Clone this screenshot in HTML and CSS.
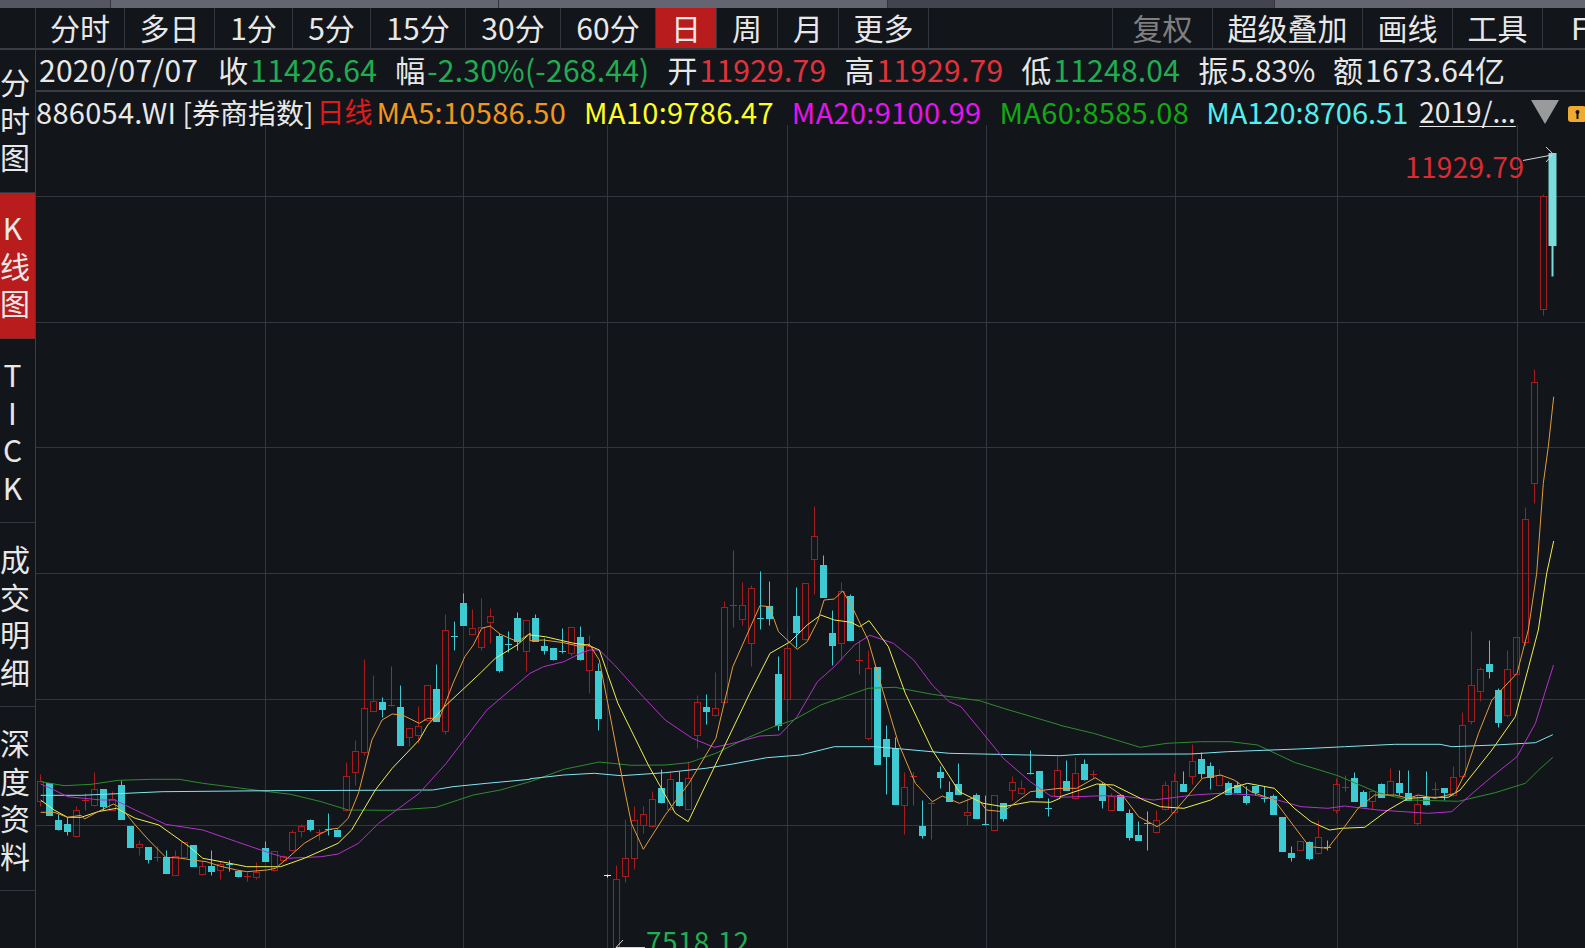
FILE: index.html
```html
<!DOCTYPE html>
<html lang="zh-CN">
<head>
<meta charset="utf-8">
<title>886054.WI 券商指数 日线</title>
<link rel="stylesheet" href="styles.css">
</head>
<body>
<div class="strip">
  <div class="seg seg-a"></div>
  <div class="seg seg-b"></div>
  <div class="seg seg-c"></div>
  <div class="seg seg-d"></div>
  <div class="seg seg-e"></div>
</div>
<nav class="toolbar">
  <div class="cell"></div>
  <div class="cell">分时</div>
  <div class="cell">多日</div>
  <div class="cell">1分</div>
  <div class="cell">5分</div>
  <div class="cell">15分</div>
  <div class="cell">30分</div>
  <div class="cell">60分</div>
  <div class="cell active">日</div>
  <div class="cell">周</div>
  <div class="cell">月</div>
  <div class="cell">更多</div>
  <div class="cell"></div>
  <div class="cell muted">复权</div>
  <div class="cell">超级叠加</div>
  <div class="cell">画线</div>
  <div class="cell">工具</div>
  <div class="cell last">F</div>
</nav>
<div class="body">
  <aside class="sidebar">
    <div class="side side-1">分<br>时<br>图</div>
    <div class="side side-2 active">K<br>线<br>图</div>
    <div class="side side-3">T<br>I<br>C<br>K</div>
    <div class="side side-3">成<br>交<br>明<br>细</div>
    <div class="side side-3">深<br>度<br>资<br>料</div>
  </aside>
  <main class="main">
    <div class="quote">
      <span class="date">2020/07/07</span>
      <span>收<b class="down">11426.64</b></span>
      <span>幅<b class="down">-2.30%(-268.44)</b></span>
      <span>开<b class="up">11929.79</b></span>
      <span>高<b class="up">11929.79</b></span>
      <span>低<b class="down">11248.04</b></span>
      <span>振<b class="tight">5.83%</b></span>
      <span>额<b>1673.64亿</b></span>
    </div>
    <div class="info">
      <span class="name"><span class="code">886054.WI</span> <span class="cn">[券商指数]</span></span>
      <span class="period">日线</span>
      <span class="ma ma5">MA5:10586.50</span>
      <span class="ma ma10">MA10:9786.47</span>
      <span class="ma ma20">MA20:9100.99</span>
      <span class="ma ma60">MA60:8585.08</span>
      <span class="ma ma120">MA120:8706.51</span>
      <span class="date-link">2019/...</span>
      <span class="tri"></span>
      <svg class="lock" width="18" height="16" viewBox="0 0 18 16" aria-hidden="true">
        <rect width="18" height="16" rx="3" fill="#f0aa32"/>
        <circle cx="9.5" cy="6" r="2" fill="#15130e"/>
        <rect x="8.5" y="6" width="2" height="7" fill="#15130e"/>
      </svg>
    </div>
    <div class="chart">
      <svg id="kline" class="kline" viewBox="36 125 1549 823" width="1549" height="823"></svg>
      <span class="label label-high">11929.79</span>
      <span class="label label-low">7518.12</span>
    </div>
  </main>
</div>
<script src="chart.js"></script>
</body>
</html>
```
FILE: styles.css
```css
* { box-sizing: border-box; }
html, body { margin: 0; height: 100%; }
body {
  width: 1585px;
  height: 948px;
  overflow: hidden;
  background: #12151a;
  color: #e8e8e8;
  font-family: "Noto Sans CJK SC", "Noto Sans", sans-serif;
  font-size: 30px;
  display: flex;
  flex-direction: column;
}
.strip { height: 8px; display: flex; flex: none; }
.seg { height: 100%; border-right: 1px solid #33343c; }
.seg-a { width: 111px; background: #55565f; }
.seg-b { width: 388px; background: #646570; }
.seg-c { width: 389px; background: #646570; }
.seg-d { width: 387px; background: #43444e; }
.seg-e { flex: 1; background: #646570; border-right: 0; }

.toolbar {
  flex: none;
  height: 42px;
  display: grid;
  grid-template-columns: 36px 89px 90px 78px 78px 95px 95px 95px 61px 61px 61px 90px 184px 100px 150px 90px 90px 1fr;
  border-bottom: 2px solid #3a3d44;
  line-height: 38px;
}
.cell {
  height: 40px;
  border-right: 1px solid #33363c;
  text-align: center;
  white-space: nowrap;
}
.cell.active { background: #b81c1c; }
.cell.muted { color: #7f7f7f; }
.cell.last { border-right: 0; text-align: left; padding-left: 28px; }

.body { flex: 1; display: flex; min-height: 0; }
.sidebar {
  flex: none;
  width: 36px;
  border-right: 1px solid #3a3d44;
  display: flex;
  flex-direction: column;
}
.side {
  width: 100%;
  padding-right: 10px;
  text-align: center;
  line-height: 37.7px;
  border-bottom: 1px solid #33363c;
  white-space: nowrap;
}
.side-1 { height: 143px; padding-top: 13px; }
.side-2 { height: 146px; padding-top: 16px; }
.side-3 { height: 184px; padding-top: 17px; }
.side.active { background: #b81c1c; border-bottom-color: #7c2a2a; }

.main { flex: 1; min-width: 0; display: flex; flex-direction: column; }
.quote {
  flex: none;
  height: 42px;
  padding-left: 3px;
  display: flex;
  gap: 18px;
  line-height: 38px;
  white-space: nowrap;
  border-bottom: 2px solid #3a3d44;
}
.quote .date { letter-spacing: 0.25px; margin-right: 2px; }
.quote b { font-weight: 400; margin-left: 2px; letter-spacing: 0.25px; }
.quote b.tight { letter-spacing: -0.2px; }
.down { color: #20ad52; }
.up { color: #e0333b; }

.info {
  flex: none;
  height: 33px;
  padding-top: 6px;
  display: flex;
  align-items: center;
  gap: 18px;
  font-size: 28px;
  line-height: 27px;
  white-space: nowrap;
}
.code { font-size: 29px; letter-spacing: 0.3px; }
.name { margin-right: -15px; }
.period { color: #e01a1a; margin-right: -14px; }
.ma { font-size: 29px; letter-spacing: 0.3px; }
.ma5 { color: #f0981e; }
.ma10 { color: #ffff22; }
.ma20 { color: #e414ea; }
.ma60 { color: #12a814; }
.ma120 { color: #52f0f0; letter-spacing: 0; margin-left: -1px; }
.date-link { color: #e8e8e8; text-decoration: underline; text-underline-offset: 3px; text-decoration-thickness: 1px; margin-left: -7px; }
.tri {
  flex: none;
  width: 0;
  height: 0;
  margin-left: -3px;
  border-left: 14px solid transparent;
  border-right: 14px solid transparent;
  border-top: 24px solid #999a9c;
}
.lock { flex: none; margin-left: -9px; margin-top: 5px; }

.chart { position: relative; flex: 1; min-height: 0; overflow: hidden; }
.kline { display: block; }
.label {
  position: absolute;
  font-size: 28px;
  line-height: 36px;
  letter-spacing: 0.35px;
  white-space: nowrap;
}
.label-high { left: 1369px; top: 23px; color: #d92c34; }
.label-low { left: 610px; top: 798px; color: #20ad52; }

/* chart strokes */
.grid { stroke: #33363c; stroke-width: 1; }
.red { stroke: #a61c1c; stroke-width: 1; fill: none; }
.cross-red { stroke: #c01c1c; stroke-width: 1; }
.cyan { fill: #3ecad2; stroke: none; }
.cyan-w { stroke: #3ecad2; stroke-width: 1; }
.light { fill: #7bdcdc; }
.light-w { stroke: #7bdcdc; stroke-width: 2; }
.white-w { stroke: #e8e8e8; stroke-width: 1; }
.trend { fill: none; stroke-width: 1; stroke-linejoin: round; }
.l5 { stroke: #e29c3e; }
.l10 { stroke: #eeee50; }
.l20 { stroke: #b232c8; }
.l60 { stroke: #2d8c2d; }
.l120 { stroke: #82e6ee; }
.mark { stroke: #d4d4d4; stroke-width: 1; fill: none; }
```
FILE: chart.js
```js
// Candles: [kind, bodyTop, bodyBottom, wickTop, wickBottom]; base + v/3 = page y.
var groups = [
  { base: 580, list: [
    ['R',604,665,582,680],['C',610,707,610,707],['C',720,747,703,750],['C',732,753,712,765],['R',692,768,680,772],
    ['X',660,660,640,692],['R',628,677,578,680],['C',628,680,628,690],['R',658,690,635,692],['C',615,717,600,717],
    ['C',740,803,740,803],['R',792,803,780,827],['C',801,837,801,850],['X',831,831,800,845],['C',831,881,812,881],
    ['R',830,885,812,887],['R',787,833,787,835],['C',795,860,795,860],['R',858,884,845,886],['C',858,873,810,887],
    ['R',853,871,845,897],['Y',852,852,842,875],['C',873,890,870,893],['X',890,890,878,903],['R',876,892,848,898],
    ['C',804,843,783,845],['R',815,872,815,875],['R',830,842,825,845],['R',757,812,750,815],['R',738,755,732,772],
    ['C',720,747,718,755],['X',758,758,748,782],['Y',747,747,700,765],['C',751,768,748,770],['R',589,692,546,695],
    ['R',515,577,482,615],['R',385,518,238,525],['R',364,395,287,395],['C',367,389,351,413],['X',375,375,260,378],
    ['C',381,495,316,495],['R',446,472,446,500],['R',440,465,378,490],['R',316,420,316,425],['C',327,423,252,425],
    ['R',151,455,102,462],['Y',170,170,123,210],['C',69,137,40,137],['R',146,162,87,165],['R',143,203,55,212],
    ['R',110,127,85,190],['C',168,270,160,278],['Y',192,192,153,218],['C',114,183,97,210],['R',120,214,120,275]
  ]},
  { base: 490, list: [
    ['C',385,455,372,455],['C',468,480,445,493],['C',475,507,475,510],['Y',485,485,415,490],['R',412,490,412,500],
    ['C',441,507,410,510],['R',470,540,435,610],['C',543,684,520,720],['W',1157,1157,1152,1162],['R',1168,1500,1125,1500],
    ['R',1105,1160,988,1178],['R',990,1105,950,1138],['R',973,1007,950,1030],['R',928,1010,905,1012],['C',895,938,838,940],
    ['R',868,958,845,960],['C',877,945,845,950],['R',866,957,815,958],['R',638,737,615,775],['C',652,665,612,702],
    ['R',655,677,548,680],['R',352,638,335,640],['X',347,347,182,412],['R',347,388,278,405],['R',295,460,285,530],
    ['Y',386,386,243,417],['C',349,386,273,405],['C',553,707,498,722],['R',475,627,415,665],['C',378,426,292,473],
    ['R',280,447,280,450],['R',140,208,50,312],['C',225,321,195,321],['C',430,467,360,525],['R',303,460,278,512],
    ['C',318,450,312,450],['X',510,510,450,552],['R',535,745,480,750],['C',532,824,532,824],['C',747,800,705,912],
    ['C',775,944,742,944],['R',892,945,848,1032],['X',858,858,848,945],['C',1009,1035,930,1045],['X',941,941,935,1048],
    ['C',847,863,828,895],['C',908,935,873,935],['C',884,913,820,913],['R',967,975,925,1005],['C',916,986,910,986],
    ['Y',1002,1002,915,1005],['R',916,1022,916,1022],['C',940,986,940,995],['R',878,902,858,930],['R',896,910,870,912],
    ['Y',850,850,780,852],['C',843,922,843,925],['Y',955,955,925,980],['R',842,920,800,925]
  ]},
  { base: 600, list: [
    ['C',544,570,480,570],['R',520,595,472,597],['C',492,537,478,540],['X',522,522,512,535],['C',552,600,548,624],
    ['R',588,630,580,632],['C',587,630,585,630],['C',640,712,627,722],['C',705,722,665,722],['Y',670,670,633,750],
    ['R',661,698,630,700],['R',556,628,545,630],['R',545,638,520,640],['C',552,573,513,573],['R',484,530,432,552],
    ['C',477,519,458,535],['C',499,533,487,567],['R',525,555,507,556],['C',549,584,545,584],['C',556,578,545,580],
    ['C',588,606,560,612],['C',558,578,558,585],['Y',595,595,560,608],['C',590,644,583,644],['C',651,755,651,755],
    ['C',759,771,738,783],['R',724,752,724,752],['C',728,774,725,780],['R',712,760,660,762],['Y',743,743,720,750],
    ['R',553,632,535,640],['X',563,563,525,575],['C',534,603,517,603],['C',576,620,570,620],['R',575,605,575,628],
    ['C',553,592,550,592],['R',545,585,505,587],['C',550,578,510,585],['C',580,600,510,600],['R',613,670,585,675],
    ['C',594,612,513,615],['X',567,567,548,585],['C',565,578,565,600],['R',532,585,498,590],['R',377,530,337,532],
    ['R',256,365,93,372],['R',208,274,203,303],['C',193,215,120,236],['C',270,368,265,383],['R',208,345,150,352],
    ['R',112,222,112,224]
  ]},
  { base: 130, list: [
    ['R',1168,1538,1133,1545],['R',757,1060,718,1120],['R',199,538,192,555],['L',69,345,69,440]
  ]}
];

// Moving averages, traced as runs of points; each run has its own crop transform.
var T = {
  a: function (p) { return [p[0] / 2.958, 580 + p[1] / 3]; },
  b: function (p) { return [530 + p[0] / 2.958, 490 + p[1] / 3]; },
  c: function (p) { return [1060 + p[0] / 2.987, 600 + p[1] / 3]; },
  d: function (p) { return [1400 + p[0] / 3, 130 + p[1] / 3]; }
};
var lines = {
  l60: { a: '120,605 190,617 270,613 350,601 450,598 530,598 600,610 770,632 860,643 950,665 1030,690 1160,691 1290,682 1400,645 1480,630 1568,605',
         b: '0,875 100,838 205,816 300,826 400,825 470,818 550,790 640,745 720,710 780,690 860,645 1000,595 1080,592 1190,613 1330,632 1400,655 1568,705',
         c: '0,376 100,400 240,442 320,430 420,425 510,425 590,435 700,487 830,527 950,578 1040,600 1190,604 1300,578 1390,550 1430,510 1472,472' },
  l120: { a: '120,646 240,646 480,635 800,632 1280,630 1340,620 1440,610 1568,598',
          b: '0,866 100,855 190,850 270,857 400,848 520,835 600,822 700,803 800,795 900,770 1020,770 1110,778 1240,790 1568,797',
          c: '0,467 60,463 390,462 500,455 710,447 850,440 1000,433 1135,433 1170,440 1300,435 1420,428 1472,404' },
  l20: { a: '120,612 150,625 200,650 300,660 340,660 400,690 490,733 600,750 700,785 800,820 850,835 950,830 1000,822 1060,790 1120,730 1240,640 1320,550 1440,390 1568,280',
         b: '0,550 40,530 100,515 150,490 175,480 205,480 250,525 330,615 400,690 480,745 545,772 600,760 680,738 738,735 790,680 850,575 900,530 960,465 1005,436 1075,460 1135,510 1190,585 1240,635 1275,650 1340,730 1400,805 1480,875 1540,918 1568,920',
         c: '0,592 130,587 200,590 280,600 400,585 480,580 580,585 650,600 720,620 800,625 850,618 950,630 1100,640 1170,635 1220,590 1290,530 1365,470 1420,370 1474,195' },
  l10: { a: '120,660 160,690 200,712 240,712 290,695 345,685 400,715 470,735 560,800 600,835 680,850 730,860 800,860 830,860 900,835 1000,790 1040,750 1110,630 1160,565 1240,480 1265,435 1320,375 1420,280 1465,235 1530,195 1568,160',
         b: '0,435 45,440 130,460 170,465 205,480 260,640 350,825 430,970 468,995 560,800 650,610 710,490 770,455 820,405 860,375 900,390 950,397 975,410 1003,392 1060,470 1110,610 1190,780 1270,905 1340,940 1400,950 1480,935 1540,937 1568,925',
         c: '0,590 75,565 110,552 160,555 250,600 300,620 370,625 450,600 510,565 560,550 640,565 700,625 750,665 805,690 840,685 910,682 980,630 1040,595 1100,592 1160,592 1195,570 1290,450 1360,350 1400,200',
         d: '415,1500 440,1330 461,1233' },
  l5: { a: '120,697 160,697 200,712 240,706 250,717 290,695 335,672 360,685 400,735 440,780 490,832 530,834 570,840 610,845 650,858 700,870 730,875 790,870 815,865 850,835 900,790 945,763 975,748 1000,745 1030,715 1060,640 1100,480 1130,420 1160,402 1190,405 1240,430 1265,415 1300,415 1340,310 1375,230 1400,195 1425,145 1450,138 1480,163 1531,185 1568,160',
        b: '0,452 40,450 100,458 150,470 175,462 205,510 230,640 260,800 300,1000 335,1078 400,975 470,880 550,745 600,530 680,347 708,350 735,425 790,478 820,455 850,395 870,330 900,327 925,303 950,345 1000,450 1040,590 1090,760 1140,880 1190,935 1220,918 1270,940 1320,920 1350,960 1400,965 1480,905 1568,895',
        c: '0,565 50,565 105,533 140,555 190,590 235,650 290,680 320,660 380,590 425,535 480,525 520,540 570,575 640,600 700,680 745,740 800,745 850,680 890,625 940,585 1000,585 1040,595 1070,585 1120,595 1180,580 1210,520 1250,400 1290,300 1365,220',
        d: '385,1500 410,1330 430,1060 445,950 461,800' }
};

var NS = 'http://www.w3.org/2000/svg';
var svg = document.getElementById('kline');
function add(tag, cls, attrs) {
  var el = document.createElementNS(NS, tag);
  if (cls) el.setAttribute('class', cls);
  for (var k in attrs) el.setAttribute(k, attrs[k]);
  svg.appendChild(el);
}
function seg(cls, x1, y1, x2, y2) { add('line', cls, { x1: x1, y1: y1, x2: x2, y2: y2 }); }
function snap(v) { return Math.round(v - 0.5) + 0.5; }

// Grid
[196.5, 322.5, 447.5, 573.5, 699.5, 825.5].forEach(function (y) { seg('grid', 36, y, 1585, y); });
[265.5, 463.5, 607.5, 787.5, 986.5, 1175.5, 1337.5, 1517.5].forEach(function (x) { seg('grid', x, 125, x, 948); });

// Candles
var i = 0;
groups.forEach(function (g) {
  g.list.forEach(function (c) {
    var x = 40.5 + 9 * i++;
    var k = c[0];
    var t = snap(g.base + c[1] / 3), b = snap(g.base + c[2] / 3);
    var wt = snap(g.base + c[3] / 3), wb = snap(g.base + c[4] / 3);
    if (k === 'R') {
      if (wt < t) seg('red', x, wt, x, t);
      if (wb > b) seg('red', x, b, x, wb);
      add('rect', 'red', { x: x - 3, y: t, width: 6, height: b - t });
    } else if (k === 'C') {
      seg('cyan-w', x, wt, x, wb);
      add('rect', 'cyan', { x: x - 3.5, y: t - 0.5, width: 7, height: b - t + 1 });
    } else if (k === 'L') {
      seg('light-w', x, t, x, wb);
      add('rect', 'light', { x: x - 4, y: t - 0.5, width: 8, height: b - t + 1 });
    } else {
      var cls = k === 'X' ? 'cross-red' : k === 'W' ? 'white-w' : 'cyan-w';
      seg(cls, x, wt, x, wb);
      seg(cls, x - 3.5, t, x + 3.5, t);
    }
  });
});

// Moving averages
Object.keys(lines).forEach(function (name) {
  var run = lines[name], pts = [];
  Object.keys(run).forEach(function (key) {
    run[key].split(' ').forEach(function (s) {
      var p = T[key](s.split(',').map(Number));
      pts.push(p[0].toFixed(1) + ',' + p[1].toFixed(1));
    });
  });
  add('polyline', 'trend ' + name, { points: pts.join(' ') });
});

// High and low markers
seg('mark', 1523, 160.5, 1552, 155);
seg('mark', 1546, 147, 1552.7, 153.5);
seg('mark', 1546, 162, 1552.7, 154.5);
seg('mark', 616, 947.5, 645, 947.5);
seg('mark', 623, 940, 616, 947.5);
```
